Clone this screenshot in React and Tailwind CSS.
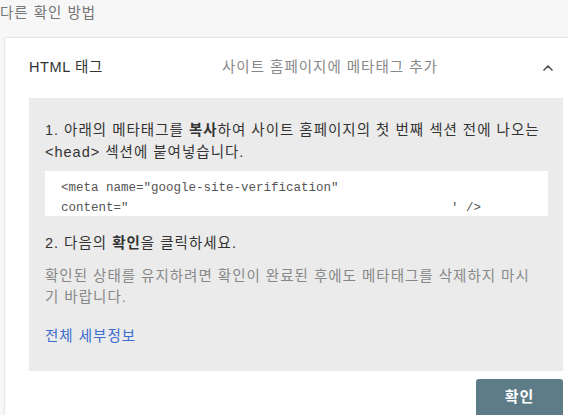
import { ChevronUp } from 'lucide-react';

const KR = { fontFamily: '"Liberation Sans", "Noto Sans CJK KR", sans-serif' };

export default function App() {
  return (
    <div className="min-h-screen bg-[#f7f7f7] overflow-hidden text-[14px] tracking-[1px]" style={KR}>
      <div className="h-[38px] pt-[3px] leading-[21px] text-[#757575] text-[14.5px]">다른 확인 방법</div>

      <div className="ml-[5px] bg-white shadow-[0_0_2px_rgba(0,0,0,0.25)] rounded-tl-[2px]">
        <div className="h-[60px] flex items-center pl-[24px] pr-[12px]">
          <div className="w-[193px] text-[#333] text-[14.5px] tracking-[0.6px]">HTML 태그</div>
          <div className="flex-1 text-[#888] text-[14.5px]">사이트 홈페이지에 메타태그 추가</div>
          <ChevronUp size={16} strokeWidth={2.5} className="text-[#555]" />
        </div>

        <div className="ml-[24px] mr-[5px] bg-[#ebebeb] pl-[16px] pr-[15px] pt-[21px] pb-[24px]">
          <p className="leading-[22px] text-[#333] text-[14.5px]">
            1. 아래의 메타태그를 <b>복사</b>하여 사이트 홈페이지의 첫 번째 섹션 전에 나오는
            <br />
            &lt;head&gt; 섹션에 붙여넣습니다.
          </p>
          <div
            className="mt-[8px] bg-white h-[45px] pl-[16px] pt-[7px] text-[12.5px] leading-[20px] text-[#555] whitespace-pre tracking-normal"
            style={{ fontFamily: '"Liberation Mono", monospace' }}
          >
            {'<meta name="google-site-verification"\ncontent="                                           \' />'}
          </div>
          <p className="mt-[16px] leading-[22px] text-[#333] text-[14.5px]">
            2. 다음의 <b>확인</b>을 클릭하세요.
          </p>
          <p className="mt-[12px] leading-[21px] text-[#888] text-[14.5px]">
            확인된 상태를 유지하려면 확인이 완료된 후에도 메타태그를 삭제하지 마시
            <br />
            기 바랍니다.
          </p>
          <a className="block mt-[17px] leading-[22px] text-[#3a6dcf] text-[14.5px]">전체 세부정보</a>
        </div>

        <div className="flex justify-end mr-[5px] mt-[8px]">
          <button className="w-[87px] h-[36px] bg-[#5e7b88] text-white font-bold text-[15px] rounded-t-[3px]">
            확인
          </button>
        </div>
      </div>
    </div>
  );
}
